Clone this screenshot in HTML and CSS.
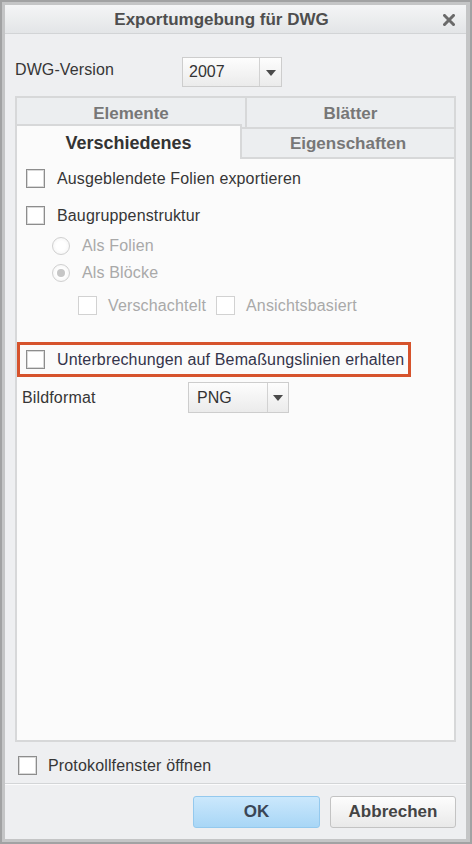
FILE: index.html
```html
<!DOCTYPE html>
<html lang="de">
<head>
<meta charset="utf-8">
<title>Exportumgebung für DWG</title>
<link rel="stylesheet" href="styles.css">
</head>
<body>
<div class="window">
  <div class="frame">
    <div class="titlebar">
      <span class="title">Exportumgebung für DWG</span>
      <span class="close-area">
        <svg class="close" width="12" height="12" viewBox="0 0 12 12" aria-hidden="true"><path d="M1.5 1.5 L10.5 10.5 M10.5 1.5 L1.5 10.5" stroke="#6a6a6a" stroke-width="3" stroke-linecap="square" fill="none"/></svg>
      </span>
    </div>

    <div class="version-row">
      <span class="version-label">DWG-Version</span>
      <div class="select select-version">
        <span class="select-value">2007</span>
        <span class="select-btn"><span class="caret"></span></span>
      </div>
    </div>

    <div class="panel">
      <div class="tabs-top">
        <div class="tab tab-elemente">Elemente</div>
        <div class="tab tab-blaetter">Blätter</div>
      </div>
      <div class="tabs-bottom">
        <div class="tab-active">Verschiedenes</div>
        <div class="tab tab-eigenschaften">Eigenschaften</div>
      </div>
      <div class="tab-content">
        <div class="opt opt-1"><span class="cb"></span><span class="opt-text">Ausgeblendete Folien exportieren</span></div>
        <div class="opt opt-2"><span class="cb"></span><span class="opt-text">Baugruppenstruktur</span></div>
        <div class="opt radio-row radio-1"><span class="radio"></span><span class="opt-text disabled">Als Folien</span></div>
        <div class="opt radio-row radio-2"><span class="radio checked"></span><span class="opt-text disabled">Als Blöcke</span></div>
        <div class="opt sub-row">
          <span class="cb cb-disabled"></span><span class="opt-text disabled sub-text">Verschachtelt</span>
          <span class="cb cb-disabled"></span><span class="opt-text disabled">Ansichtsbasiert</span>
        </div>
        <div class="highlight"><span class="cb"></span><span class="opt-text highlight-text">Unterbrechungen auf Bemaßungslinien erhalten</span></div>
        <div class="bild-row">
          <span class="bild-label">Bildformat</span>
          <div class="select select-bild">
            <span class="select-value">PNG</span>
            <span class="select-btn"><span class="caret"></span></span>
          </div>
        </div>
      </div>
    </div>

    <div class="protokoll-row"><span class="cb"></span><span class="opt-text">Protokollfenster öffnen</span></div>
    <div class="separator"></div>
    <div class="footer">
      <button class="btn btn-ok">OK</button>
      <button class="btn btn-cancel">Abbrechen</button>
    </div>
  </div>
</div>
</body>
</html>
```

FILE: styles.css
```css
* { box-sizing: border-box; }
html, body { margin: 0; padding: 0; }
body {
  font-family: "Liberation Sans", Arial, sans-serif;
  font-size: 16px;
  color: #363636;
  background: #a3a4a5;
}
.window {
  width: 472px;
  height: 844px;
  border: 2px solid #a1a2a3;
}
.frame {
  height: 100%;
  border: 3px solid #c4c5c6;
  border-right-width: 4px;
  background: #eeeff1;
  display: flex;
  flex-direction: column;
}
.titlebar {
  height: 29px;
  flex: none;
  display: flex;
  align-items: center;
  border-bottom: 1px solid #d2d4d6;
  background: linear-gradient(#f4f5f6, #e3e5e7);
}
.title {
  flex: 1;
  text-align: center;
  font-weight: bold;
  font-size: 17px;
  color: #4e4e4e;
  padding-top: 1px;
}
.close-area {
  width: 28px;
  display: flex;
  align-items: center;
  padding-left: 5px;
  padding-top: 1px;
}
.close { display: block; }

.version-row {
  margin-top: 23px;
  height: 30px;
  padding-left: 10px;
  display: flex;
  align-items: center;
  flex: none;
}
.version-label {
  width: 167px;
  margin-bottom: 5px;
  color: #363636;
  letter-spacing: 0.1px;
}
.select {
  display: flex;
  height: 30px;
  width: 100px;
  border: 1px solid #cdcdcd;
  background: linear-gradient(#fdfdfd, #ebebeb);
}
.select-value {
  flex: 1;
  padding-left: 6px;
  display: flex;
  align-items: center;
  color: #333;
}
.select-btn {
  width: 22px;
  border-left: 1px solid #d2d2d2;
  display: flex;
  align-items: center;
  justify-content: center;
}
.caret {
  width: 0;
  height: 0;
  border-left: 5px solid transparent;
  border-right: 5px solid transparent;
  border-top: 6px solid #4a4a4a;
  margin-top: 1px;
}

.panel {
  margin-top: 9px;
  margin-left: 10px;
  width: 441px;
  height: 646px;
  flex: none;
  border: 2px solid #d7d8d9;
  background: #fbfbfb;
  display: flex;
  flex-direction: column;
}
.tabs-top {
  display: flex;
  height: 31px;
  border-bottom: 2px solid #d7d8d9;
  flex: none;
}
.tab {
  background: #eceef0;
  font-weight: bold;
  font-size: 17px;
  color: #777;
  display: flex;
  align-items: center;
  justify-content: center;
}
.tab-elemente {
  width: 230px;
  border-right: 2px solid #d7d8d9;
  padding-top: 3px;
}
.tab-blaetter { flex: 1; padding-top: 3px; }
.tabs-bottom {
  display: flex;
  height: 30px;
  flex: none;
}
.tab-active {
  position: relative;
  z-index: 1;
  width: 225px;
  margin-top: -5px;
  height: 35px;
  border-top: 2px solid #d7d8d9;
  border-right: 2px solid #d7d8d9;
  background: #fbfbfb;
  font-weight: bold;
  font-size: 18px;
  color: #333;
  display: flex;
  align-items: center;
  justify-content: center;
  padding-top: 2px;
}
.tab-eigenschaften {
  flex: 1;
  border-bottom: 2px solid #d7d8d9;
  padding-top: 1px;
}

.tab-content {
  flex: 1;
  padding-left: 9px;
  display: flex;
  flex-direction: column;
  align-items: flex-start;
}
.opt {
  display: flex;
  align-items: center;
  height: 19px;
}
.opt-text {
  letter-spacing: 0.15px;
  color: #363636;
  white-space: nowrap;
}
.opt .cb + .opt-text { margin-left: 12px; }
.opt-1 { margin-top: 10px; }
.opt-2 { margin-top: 18px; }
.cb {
  flex: none;
  width: 19px;
  height: 19px;
  border: 1px solid #8d8d8d;
  box-shadow: inset 0 0 0 1px #d9d9d9;
  background: #fff;
}
.cb-disabled {
  border-color: #d2d2d2;
  box-shadow: none;
}
.disabled { color: #a9a9a9; }

.radio-row { height: 18px; margin-left: 26px; }
.radio-1 { margin-top: 12px; }
.radio-2 { margin-top: 9px; }
.radio {
  flex: none;
  width: 18px;
  height: 18px;
  border-radius: 50%;
  border: 1px solid #d0d0d0;
  background: radial-gradient(circle, #ffffff 40%, #f0f0f0 100%);
  display: flex;
  align-items: center;
  justify-content: center;
  margin-right: 12px;
}
.radio.checked::after {
  content: "";
  width: 8px;
  height: 8px;
  border-radius: 50%;
  background: #c6c6c6;
}

.sub-row { margin-top: 14px; margin-left: 52px; }
.sub-row .cb + .opt-text { margin-left: 11px; }
.sub-text { margin-right: 10px; }

.highlight {
  margin-top: 27px;
  margin-left: -9px;
  width: 394px;
  height: 35px;
  border: 3px solid #d6532c;
  display: flex;
  align-items: center;
  padding-left: 6px;
}
.highlight .opt-text { margin-left: 12px; }
.highlight-text { color: #34344a; }

.bild-row {
  margin-top: 5px;
  margin-left: -4px;
  display: flex;
  align-items: center;
}
.bild-label {
  width: 166px;
  letter-spacing: 0.15px;
  color: #363636;
}
.select-bild { width: 101px; height: 31px; }
.select-bild .select-value { padding-left: 8px; }
.select-bild .select-btn { width: 21px; }

.protokoll-row {
  margin-top: 14px;
  padding-left: 13px;
  height: 19px;
  display: flex;
  align-items: center;
  flex: none;
}
.protokoll-row .opt-text { margin-left: 11px; }
.separator {
  margin-top: 8px;
  height: 2px;
  flex: none;
  border-top: 1px solid #d3d5d7;
  border-bottom: 1px solid #fbfbfc;
}
.footer {
  padding-top: 11px;
  padding-right: 10px;
  display: flex;
  justify-content: flex-end;
  gap: 10px;
  flex: none;
}
.btn {
  height: 32px;
  border-radius: 3px;
  font-family: "Liberation Sans", Arial, sans-serif;
  font-weight: bold;
  font-size: 17px;
  padding: 0;
  cursor: default;
}
.btn-ok {
  width: 127px;
  border: 1px solid #94c9ee;
  background: linear-gradient(#cbe8fc, #a8d6f6);
  color: #3a4656;
}
.btn-cancel {
  width: 126px;
  border: 1px solid #c3c3c3;
  background: linear-gradient(#fdfdfd, #e9e9e9);
  color: #444;
}
```
